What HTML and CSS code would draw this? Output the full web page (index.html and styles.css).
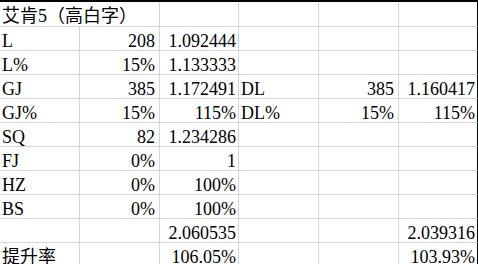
FILE: index.html
```html
<!DOCTYPE html>
<html lang="zh">
<head>
<meta charset="utf-8">
<title>艾肯5</title>
<link rel="stylesheet" href="styles.css">
</head>
<body>
<div class="page">
  <div class="topbar"></div>
  <div class="sheet">
    <div class="cell title">艾肯5（高白字）</div>
    <div class="cell"></div><div class="cell"></div><div class="cell"></div><div class="cell last"></div>

    <div class="cell">L</div><div class="cell n">208</div><div class="cell n2">1.092444</div>
    <div class="cell"></div><div class="cell"></div><div class="cell last"></div>

    <div class="cell">L%</div><div class="cell n">15%</div><div class="cell n2">1.133333</div>
    <div class="cell"></div><div class="cell"></div><div class="cell last"></div>

    <div class="cell">GJ</div><div class="cell n">385</div><div class="cell n2">1.172491</div>
    <div class="cell">DL</div><div class="cell n">385</div><div class="cell n2 last">1.160417</div>

    <div class="cell">GJ%</div><div class="cell n">15%</div><div class="cell n2">115%</div>
    <div class="cell">DL%</div><div class="cell n">15%</div><div class="cell n2 last">115%</div>

    <div class="cell">SQ</div><div class="cell n">82</div><div class="cell n2">1.234286</div>
    <div class="cell"></div><div class="cell"></div><div class="cell last"></div>

    <div class="cell">FJ</div><div class="cell n">0%</div><div class="cell n2">1</div>
    <div class="cell"></div><div class="cell"></div><div class="cell last"></div>

    <div class="cell">HZ</div><div class="cell n">0%</div><div class="cell n2">100%</div>
    <div class="cell"></div><div class="cell"></div><div class="cell last"></div>

    <div class="cell">BS</div><div class="cell n">0%</div><div class="cell n2">100%</div>
    <div class="cell"></div><div class="cell"></div><div class="cell last"></div>

    <div class="cell"></div><div class="cell"></div><div class="cell n2">2.060535</div>
    <div class="cell"></div><div class="cell"></div><div class="cell n2 last">2.039316</div>

    <div class="cell">提升率</div><div class="cell"></div><div class="cell n2">106.05%</div>
    <div class="cell"></div><div class="cell"></div><div class="cell n2 last">103.93%</div>
  </div>
</div>
</body>
</html>
```
FILE: styles.css
```css
html, body {
  margin: 0;
  padding: 0;
  background: #fff;
  overflow: hidden;
}

.page {
  width: 478px;
  height: 264px;
  overflow: hidden;
  font-family: "Liberation Serif", "Noto Sans CJK SC", serif;
  font-size: 18px;
  color: #000;
}

.topbar {
  height: 2px;
  background: #000;
}

.sheet {
  display: grid;
  grid-template-columns: 80px 80px 79px 80px 80px 79px;
  grid-template-rows: 25px;
  grid-auto-rows: 24px;
}

.cell {
  display: flex;
  align-items: flex-end;
  justify-content: flex-start;
  line-height: 18px;
  padding: 0 0 0 2px;
  border-right: 1px solid #d4d4d4;
  border-bottom: 1px solid #d4d4d4;
  white-space: nowrap;
  overflow: visible;
}

.title {
  grid-column: span 2;
  padding-bottom: 1px;
}

.n {
  justify-content: flex-end;
  padding: 0 4px 0 0;
}

.n2 {
  justify-content: flex-end;
  padding: 0 2px 0 0;
}

.last {
  border-right-color: #000;
}
```
